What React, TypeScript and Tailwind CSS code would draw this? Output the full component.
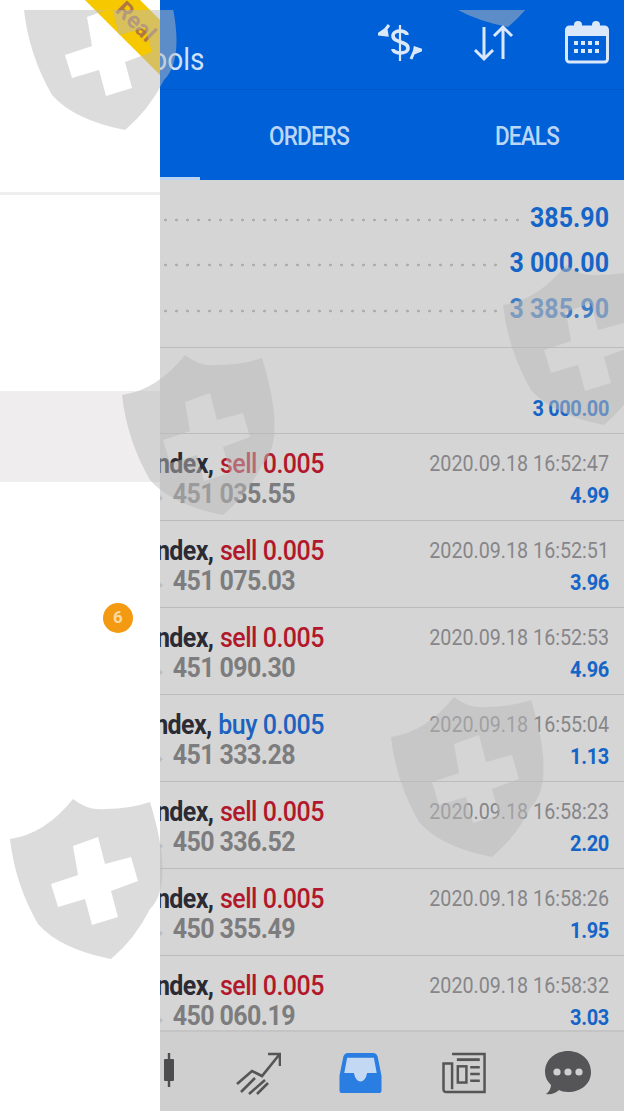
import React from "react";

const FONT = "[font-family:Roboto,'Liberation_Sans',sans-serif]";

function Shield({ className }: { className: string }) {
  return (
    <svg viewBox="0 0 156 162" className={`absolute h-[162px] w-[156px] ${className}`}>
      <path
        fillRule="evenodd"
        fill="rgba(185,185,185,0.5)"
        d="M0 40 Q35 35 63 0 Q78 12 95 10 Q120 10 140 3 Q165 85 140 110 Q125 140 101 160 Q50 150 28 125 Q5 85 0 40Z M63 47 L88 38 L95 65 L121 58 L128 82 L101 92 L108 118 L82 126 L75 100 L48 108 L41 85 L68 76Z"
      />
    </svg>
  );
}

type Deal = { side: string; vol: string; price: string; time: string; profit: string };
const deals: Deal[] = [
  { side: "sell", vol: "0.005", price: "451 035.55", time: "2020.09.18 16:52:47", profit: "4.99" },
  { side: "sell", vol: "0.005", price: "451 075.03", time: "2020.09.18 16:52:51", profit: "3.96" },
  { side: "sell", vol: "0.005", price: "451 090.30", time: "2020.09.18 16:52:53", profit: "4.96" },
  { side: "buy", vol: "0.005", price: "451 333.28", time: "2020.09.18 16:55:04", profit: "1.13" },
  { side: "sell", vol: "0.005", price: "450 336.52", time: "2020.09.18 16:58:23", profit: "2.20" },
  { side: "sell", vol: "0.005", price: "450 355.49", time: "2020.09.18 16:58:26", profit: "1.95" },
  { side: "sell", vol: "0.005", price: "450 060.19", time: "2020.09.18 16:58:32", profit: "3.03" },
];

function Row({ d }: { d: Deal }) {
  return (
    <div className="flex h-[87px] shrink-0 border-b border-[#bcbcbc] pt-[14px]">
      <div className="flex w-[165px] shrink-0 flex-col">
        <div className="flex h-[31px] w-[164px] scale-y-[1.14] justify-end overflow-hidden whitespace-nowrap text-[25px] font-medium leading-[31px] tracking-[-0.5px]">
          <span className="mr-[1px] font-bold tracking-[-0.6px] text-[#2b2b33]">Index,&nbsp;</span>
          <span className={d.side === "buy" ? "text-[#1c62c0]" : "text-[#b2182b]"}>
            {d.side} {d.vol}
          </span>
        </div>
        <div className="flex h-[30px] w-[135px] scale-y-[1.14] justify-end overflow-hidden whitespace-nowrap text-[25px] font-bold leading-[30px] tracking-[-0.6px] text-[#7d7d7f]">
          <span className="text-[#bdbdbd]">451.00 →&nbsp;</span>
          {d.price}
        </div>
      </div>
      <div className="ml-auto flex flex-col items-end pr-[15px]">
        <div className="h-[31px] scale-y-[1.1] whitespace-nowrap text-[19.7px] leading-[32px] text-[#86868a]">{d.time}</div>
        <div className="mt-[1px] h-[30px] scale-y-[1.14] text-[20px] font-bold leading-[30px] tracking-[-0.3px] text-[#1565c8]">{d.profit}</div>
      </div>
    </div>
  );
}

function Summary({ value, blue = "#1565c8" }: { value: string; blue?: string }) {
  return (
    <div className="flex h-[45.5px] items-end pb-[8px] pr-[15px]">
      <div className="mb-[12px] h-[4px] flex-1 bg-[radial-gradient(circle,#aeaeae_1.2px,transparent_1.7px)] bg-[length:11px_4px]" />
      <div className="ml-[8px] scale-y-[1.1] text-[25px] font-bold leading-[32px]" style={{ color: blue }}>
        {value}
      </div>
    </div>
  );
}

export default function App() {
  return (
    <div className={`relative flex h-[1111px] w-[624px] overflow-hidden bg-white ${FONT}`}>
      {/* drawer */}
      <div className="relative z-10 w-[160px] shrink-0 overflow-hidden bg-white">
        <div className="mt-[192px] h-[3px] bg-[#eeeeee]" />
        <div className="mt-[196px] h-[91px] bg-[#efeded]" />
        <div className="ml-[103px] mt-[121px] flex h-[30px] w-[30px] items-center justify-center rounded-full bg-[#f39a12] text-[17px] font-bold text-[#f9d9a5]">
          6
        </div>
        <div className="absolute left-[65px] top-[8px] flex h-[39px] w-[150px] rotate-45 items-center justify-center bg-[#f6c800] text-[23px] font-bold text-[#b07840]">
          <span className="-translate-x-[7px]">Real</span>
        </div>
      </div>

      {/* main */}
      <div className="flex min-w-0 flex-1 flex-col overflow-hidden bg-[#d5d5d5]">
        <div className="h-[180px] shrink-0 overflow-hidden bg-[#0060d8]">
          <div className="flex h-[90px] items-center border-b border-[#0057c8]">
            <div className="-ml-[24px] mt-[30px] scale-y-[1.14] text-[28px] leading-none text-[#cfe2fa]">Tools</div>
            <div className="mb-[6px] ml-auto flex items-center pr-[15px]">
              <svg viewBox="0 0 44 44" className="mr-[50px] h-[44px] w-[44px] text-[#dbe8fa]" fill="none" stroke="currentColor">
                <path d="M22 5V41" strokeWidth="2.2" />
                <path d="M29 15C29 10 15 9 15 16C15 23 30 21 30 28C30 35 15 34 15 29" strokeWidth="3.6" />
                <path d="M1 14L8 9L9 15Z M11 5L7 10" strokeWidth="3" fill="currentColor" />
                <path d="M43 30L36 33L37 28Z M33 39L36 32" strokeWidth="3" fill="currentColor" />
              </svg>
              <svg viewBox="0 0 44 44" className="mr-[49px] h-[44px] w-[44px] text-[#dbe8fa]" fill="none" stroke="currentColor" strokeWidth="3">
                <path d="M12 7V39M3 30L12 39L21 30" />
                <path d="M31 39V7M22 16L31 7L40 16" />
              </svg>
              <svg viewBox="0 0 44 44" className="h-[44px] w-[44px] text-[#dbe8fa]" fill="none">
                <rect x="1.5" y="7" width="41" height="35" rx="3" stroke="currentColor" strokeWidth="3" />
                <rect x="1.5" y="7" width="41" height="9" fill="currentColor" />
                <circle cx="13" cy="5" r="4" fill="currentColor" />
                <circle cx="31" cy="5" r="4" fill="currentColor" />
                <path d="M9 23H35M9 31H35" stroke="currentColor" strokeWidth="4" strokeDasharray="4 3" />
              </svg>
            </div>
          </div>
          <div className="-ml-[178px] grid h-[90px] w-[654px] grid-cols-3">
            <div className="h-[90px] border-b-[3px] border-[#b9d3f3]" />
            <div className="flex h-[90px] scale-y-[1.14] items-center justify-center pt-[4px] text-[22.5px] font-medium tracking-[-0.8px] text-[#bcd6f7]">ORDERS</div>
            <div className="flex h-[90px] scale-y-[1.14] items-center justify-center pt-[4px] text-[22.5px] font-medium tracking-[-0.8px] text-[#bcd6f7]">DEALS</div>
          </div>
        </div>

        <div className="min-h-0 flex-1 overflow-hidden">
          <div className="flex h-[168px] flex-col border-b border-[#bcbcbc] pt-[16px]">
            <Summary value="385.90" />
            <Summary value="3 000.00" />
            <Summary value="3 385.90" blue="#3f7cc4" />
          </div>
          <div className="flex h-[86px] items-end justify-end border-b border-[#bcbcbc] pb-[11px] pr-[15px]">
            <div className="scale-y-[1.14] text-[20px] font-bold leading-[28px] tracking-[-0.4px] text-[#1565c8]">3 000.00</div>
          </div>
          {deals.map((d) => (
            <Row key={d.time} d={d} />
          ))}
        </div>

        <div className="flex h-[81px] shrink-0 items-center border-t-2 border-[#c4c4c4] bg-[#cfcfcf] pt-[2px]">
          <svg viewBox="0 0 12 34" className="mb-[6px] ml-[3px] h-[34px] w-[12px] text-[#4d4d4f]" fill="currentColor">
            <rect x="1" y="6" width="10" height="22" rx="1" />
            <rect x="4.8" y="0" width="2.4" height="34" />
          </svg>
          <svg viewBox="0 0 46 44" className="ml-[60px] h-[44px] w-[46px] text-[#555557]" fill="none" stroke="currentColor" strokeWidth="2.6">
            <path d="M2 33L17 20L27 25L44 4M33 3H45V15" />
            <path d="M6 41L20 27M14 43L30 29M22 43L33 32" />
          </svg>
          <svg viewBox="0 0 44 44" className="ml-[58px] h-[42px] w-[43px]">
            <path d="M9 1H35Q39 1 40 5L44 25V40Q44 43 41 43H3Q0 43 0 40V25L4 5Q5 1 9 1Z" fill="#2a7de1" />
            <path d="M8 6H36L39 22H29Q27 31 22 31Q17 31 15 22H5Z" fill="#c3d8f2" />
          </svg>
          <svg viewBox="0 0 46 44" className="ml-[60px] h-[42px] w-[45px] text-[#555557]" fill="none" stroke="currentColor" strokeWidth="2.6">
            <path d="M10 2H44V42H4Q1 42 1 39V12H10V39" />
            <path d="M15 8H39" strokeWidth="3" />
            <rect x="16" y="15" width="9" height="17" />
            <path d="M29 16H39M29 23H39M29 30H39" />
          </svg>
          <svg viewBox="0 0 46 44" className="ml-[58px] h-[44px] w-[46px]">
            <path d="M23 0C36 0 46 9 46 21C46 33 36 41 23 41C19 41 16 40 14 39C11 42 6 44 1 43C4 41 6 37 6 34C2 30 0 26 0 21C0 9 10 0 23 0Z" fill="#555557" />
            <circle cx="12" cy="21" r="3.6" fill="#cfcfcf" />
            <circle cx="23" cy="21" r="3.6" fill="#cfcfcf" />
            <circle cx="34" cy="21" r="3.6" fill="#cfcfcf" />
          </svg>
        </div>
      </div>

      {/* watermark layer */}
      <div className="pointer-events-none absolute inset-x-0 bottom-0 top-[10px] z-20 overflow-hidden">
        <Shield className="left-[24px] top-[-40px]" />
        <Shield className="left-[407px] top-[-143px]" />
        <Shield className="left-[503px] top-[255px]" />
        <Shield className="left-[122px] top-[345px]" />
        <Shield className="left-[391px] top-[687px]" />
        <Shield className="left-[10px] top-[789px]" />
      </div>
    </div>
  );
}
